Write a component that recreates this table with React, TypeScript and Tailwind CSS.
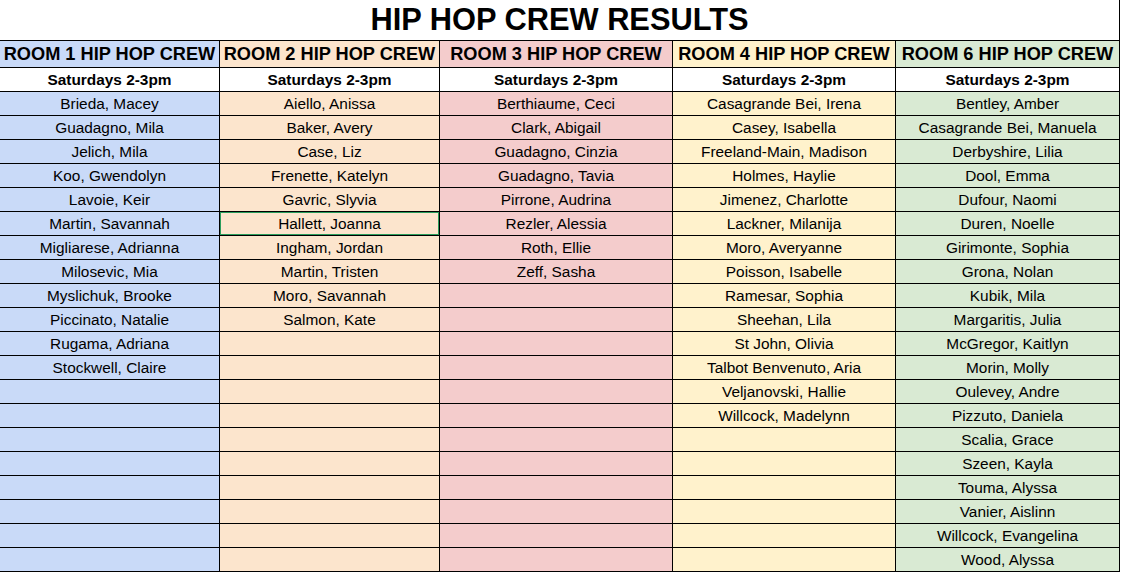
import React from 'react';

const COLUMNS = [
  {
    title: 'ROOM 1 HIP HOP CREW',
    bg: 'bg-[#c9daf8]',
    names: [
      'Brieda, Macey', 'Guadagno, Mila', 'Jelich, Mila', 'Koo, Gwendolyn', 'Lavoie, Keir',
      'Martin, Savannah', 'Migliarese, Adrianna', 'Milosevic, Mia', 'Myslichuk, Brooke',
      'Piccinato, Natalie', 'Rugama, Adriana', 'Stockwell, Claire',
    ],
  },
  {
    title: 'ROOM 2 HIP HOP CREW',
    bg: 'bg-[#fce5cd]',
    names: [
      'Aiello, Anissa', 'Baker, Avery', 'Case, Liz', 'Frenette, Katelyn', 'Gavric, Slyvia',
      'Hallett, Joanna', 'Ingham, Jordan', 'Martin, Tristen', 'Moro, Savannah', 'Salmon, Kate',
    ],
  },
  {
    title: 'ROOM 3 HIP HOP CREW',
    bg: 'bg-[#f4cccc]',
    names: [
      'Berthiaume, Ceci', 'Clark, Abigail', 'Guadagno, Cinzia', 'Guadagno, Tavia',
      'Pirrone, Audrina', 'Rezler, Alessia', 'Roth, Ellie', 'Zeff, Sasha',
    ],
  },
  {
    title: 'ROOM 4 HIP HOP CREW',
    bg: 'bg-[#fff2cc]',
    names: [
      'Casagrande Bei, Irena', 'Casey, Isabella', 'Freeland-Main, Madison', 'Holmes, Haylie',
      'Jimenez, Charlotte', 'Lackner, Milanija', 'Moro, Averyanne', 'Poisson, Isabelle',
      'Ramesar, Sophia', 'Sheehan, Lila', 'St John, Olivia', 'Talbot Benvenuto, Aria',
      'Veljanovski, Hallie', 'Willcock, Madelynn',
    ],
  },
  {
    title: 'ROOM 6 HIP HOP CREW',
    bg: 'bg-[#d9ead3]',
    names: [
      'Bentley, Amber', 'Casagrande Bei, Manuela', 'Derbyshire, Lilia', 'Dool, Emma',
      'Dufour, Naomi', 'Duren, Noelle', 'Girimonte, Sophia', 'Grona, Nolan', 'Kubik, Mila',
      'Margaritis, Julia', 'McGregor, Kaitlyn', 'Morin, Molly', 'Oulevey, Andre',
      'Pizzuto, Daniela', 'Scalia, Grace', 'Szeen, Kayla', 'Touma, Alyssa',
      'Vanier, Aislinn', 'Willcock, Evangelina', 'Wood, Alyssa',
    ],
  },
];

const ROW_COUNT = 20;
const GRID = 'grid grid-cols-[220px_220px_233px_223px_224px]';
const CELL = 'flex items-center justify-center whitespace-nowrap overflow-hidden border-r border-b border-black leading-none';

export default function App() {
  return (
    <div className="w-[1122px] h-[575px] bg-white text-black font-['Liberation_Sans',Arial,sans-serif] overflow-hidden">
      <div className="w-[1120px]">
        {/* Title */}
        <div className="h-[41px] flex items-center justify-center border-r border-b border-black text-[30.8px] font-bold leading-none">
          HIP HOP CREW RESULTS
        </div>

        {/* Room headers */}
        <div className={GRID}>
          {COLUMNS.map((col) => (
            <div key={col.title} className={`${CELL} h-[27px] text-[18.2px] font-bold ${col.bg}`}>
              {col.title}
            </div>
          ))}
        </div>

        {/* Time row */}
        <div className={GRID}>
          {COLUMNS.map((col) => (
            <div key={col.title} className={`${CELL} h-[24px] text-[15.4px] font-bold bg-white`}>
              Saturdays 2-3pm
            </div>
          ))}
        </div>

        {/* Names */}
        {Array.from({ length: ROW_COUNT }).map((_, r) => (
          <div key={r} className={GRID}>
            {COLUMNS.map((col, c) => (
              <div key={c} className={`${CELL} relative h-[24px] pt-px text-[15.4px] ${col.bg}`}>
                {col.names[r] ?? ''}
                {c === 1 && r === 5 && (
                  <span className="absolute inset-[-1px] border-2 border-[#2a9d5c] pointer-events-none" />
                )}
              </div>
            ))}
          </div>
        ))}
      </div>
    </div>
  );
}
